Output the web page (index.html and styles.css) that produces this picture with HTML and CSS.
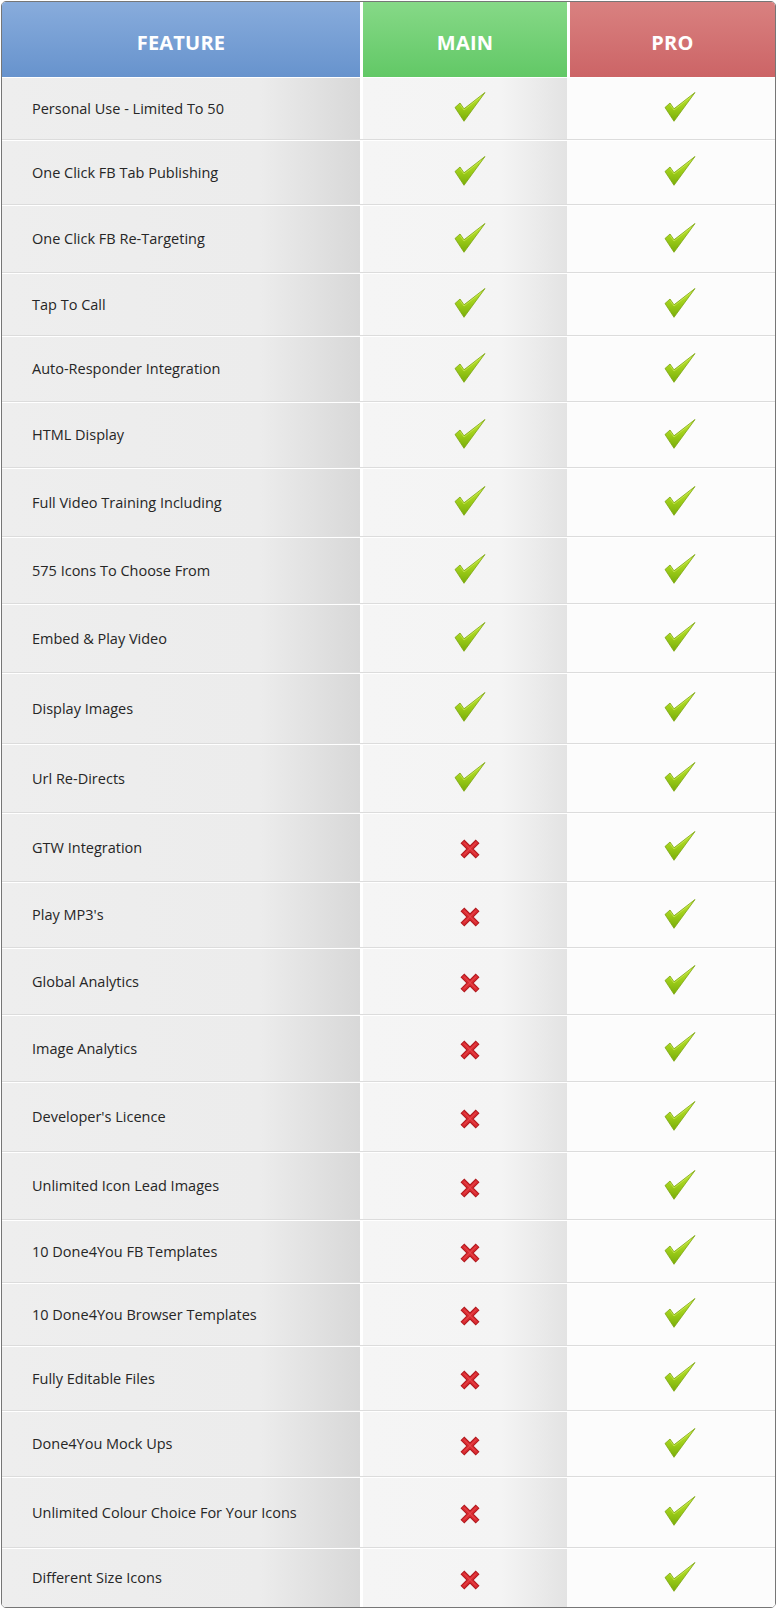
FILE: index.html
```html
<!DOCTYPE html>
<html lang="en">
<head>
<meta charset="utf-8">
<title>Feature Comparison</title>
<link rel="stylesheet" href="styles.css">
</head>
<body>
<svg class="defs" width="0" height="0" aria-hidden="true">
  <defs>
    <linearGradient id="gCheck" x1="0" y1="0" x2="0" y2="1">
      <stop offset="0" stop-color="#c4e83a"/>
      <stop offset="0.55" stop-color="#9ccc18"/>
      <stop offset="1" stop-color="#78ad0a"/>
    </linearGradient>
    <symbol id="check" viewBox="0 0 32 30">
      <path d="M1 15.5 L6 11 L10 16.8 L31 0.5 L10 29.3 Z" fill="url(#gCheck)" stroke="#7ba50f" stroke-width="0.8" stroke-linejoin="round"/>
      <path d="M6 12.5 L10 18 L27 4.5" fill="none" stroke="#d8f36a" stroke-width="0.8" opacity="0.7"/>
    </symbol>
    <symbol id="cross" viewBox="0 0 20 20">
      <path d="M2.4 2.4 L17.6 17.6 M17.6 2.4 L2.4 17.6" stroke="#ac171c" stroke-width="5.4" fill="none"/>
      <path d="M2.9 2.9 L17.1 17.1 M17.1 2.9 L2.9 17.1" stroke="#d92a30" stroke-width="3.6" fill="none"/>
      <path d="M4 3.6 L16 15.6 M16 3.6 L4 15.6" stroke="#ef5a5e" stroke-width="1" fill="none" opacity="0.75"/>
    </symbol>
  </defs>
</svg>

<div class="table">
  <div class="row head">
    <div class="hcell feature-h">FEATURE</div>
    <div class="hcell main-h">MAIN</div>
    <div class="hcell pro-h">PRO</div>
  </div>

  <div class="row"><div class="cell feat">Personal Use - Limited To 50</div><div class="cell main"><svg class="ic-check"><use href="#check"/></svg></div><div class="cell pro"><svg class="ic-check"><use href="#check"/></svg></div></div>
  <div class="row"><div class="cell feat">One Click FB Tab Publishing</div><div class="cell main"><svg class="ic-check"><use href="#check"/></svg></div><div class="cell pro"><svg class="ic-check"><use href="#check"/></svg></div></div>
  <div class="row"><div class="cell feat">One Click FB Re-Targeting</div><div class="cell main"><svg class="ic-check"><use href="#check"/></svg></div><div class="cell pro"><svg class="ic-check"><use href="#check"/></svg></div></div>
  <div class="row"><div class="cell feat">Tap To Call</div><div class="cell main"><svg class="ic-check"><use href="#check"/></svg></div><div class="cell pro"><svg class="ic-check"><use href="#check"/></svg></div></div>
  <div class="row"><div class="cell feat">Auto-Responder Integration</div><div class="cell main"><svg class="ic-check"><use href="#check"/></svg></div><div class="cell pro"><svg class="ic-check"><use href="#check"/></svg></div></div>
  <div class="row"><div class="cell feat">HTML Display</div><div class="cell main"><svg class="ic-check"><use href="#check"/></svg></div><div class="cell pro"><svg class="ic-check"><use href="#check"/></svg></div></div>
  <div class="row"><div class="cell feat">Full Video Training Including</div><div class="cell main"><svg class="ic-check"><use href="#check"/></svg></div><div class="cell pro"><svg class="ic-check"><use href="#check"/></svg></div></div>
  <div class="row"><div class="cell feat">575 Icons To Choose From</div><div class="cell main"><svg class="ic-check"><use href="#check"/></svg></div><div class="cell pro"><svg class="ic-check"><use href="#check"/></svg></div></div>
  <div class="row"><div class="cell feat">Embed &amp; Play Video</div><div class="cell main"><svg class="ic-check"><use href="#check"/></svg></div><div class="cell pro"><svg class="ic-check"><use href="#check"/></svg></div></div>
  <div class="row"><div class="cell feat">Display Images</div><div class="cell main"><svg class="ic-check"><use href="#check"/></svg></div><div class="cell pro"><svg class="ic-check"><use href="#check"/></svg></div></div>
  <div class="row"><div class="cell feat">Url Re-Directs</div><div class="cell main"><svg class="ic-check"><use href="#check"/></svg></div><div class="cell pro"><svg class="ic-check"><use href="#check"/></svg></div></div>
  <div class="row"><div class="cell feat">GTW Integration</div><div class="cell main"><svg class="ic-cross"><use href="#cross"/></svg></div><div class="cell pro"><svg class="ic-check"><use href="#check"/></svg></div></div>
  <div class="row"><div class="cell feat">Play MP3's</div><div class="cell main"><svg class="ic-cross"><use href="#cross"/></svg></div><div class="cell pro"><svg class="ic-check"><use href="#check"/></svg></div></div>
  <div class="row"><div class="cell feat">Global Analytics</div><div class="cell main"><svg class="ic-cross"><use href="#cross"/></svg></div><div class="cell pro"><svg class="ic-check"><use href="#check"/></svg></div></div>
  <div class="row"><div class="cell feat">Image Analytics</div><div class="cell main"><svg class="ic-cross"><use href="#cross"/></svg></div><div class="cell pro"><svg class="ic-check"><use href="#check"/></svg></div></div>
  <div class="row"><div class="cell feat">Developer's Licence</div><div class="cell main"><svg class="ic-cross"><use href="#cross"/></svg></div><div class="cell pro"><svg class="ic-check"><use href="#check"/></svg></div></div>
  <div class="row"><div class="cell feat">Unlimited Icon Lead Images</div><div class="cell main"><svg class="ic-cross"><use href="#cross"/></svg></div><div class="cell pro"><svg class="ic-check"><use href="#check"/></svg></div></div>
  <div class="row"><div class="cell feat">10 Done4You FB Templates</div><div class="cell main"><svg class="ic-cross"><use href="#cross"/></svg></div><div class="cell pro"><svg class="ic-check"><use href="#check"/></svg></div></div>
  <div class="row"><div class="cell feat">10 Done4You Browser Templates</div><div class="cell main"><svg class="ic-cross"><use href="#cross"/></svg></div><div class="cell pro"><svg class="ic-check"><use href="#check"/></svg></div></div>
  <div class="row"><div class="cell feat">Fully Editable Files</div><div class="cell main"><svg class="ic-cross"><use href="#cross"/></svg></div><div class="cell pro"><svg class="ic-check"><use href="#check"/></svg></div></div>
  <div class="row"><div class="cell feat">Done4You Mock Ups</div><div class="cell main"><svg class="ic-cross"><use href="#cross"/></svg></div><div class="cell pro"><svg class="ic-check"><use href="#check"/></svg></div></div>
  <div class="row"><div class="cell feat">Unlimited Colour Choice For Your Icons</div><div class="cell main"><svg class="ic-cross"><use href="#cross"/></svg></div><div class="cell pro"><svg class="ic-check"><use href="#check"/></svg></div></div>
  <div class="row"><div class="cell feat">Different Size Icons</div><div class="cell main"><svg class="ic-cross"><use href="#cross"/></svg></div><div class="cell pro"><svg class="ic-check"><use href="#check"/></svg></div></div>
</div>
</body>
</html>
```

FILE: styles.css
```css
* { box-sizing: border-box; }

html, body {
  margin: 0;
  padding: 0;
  background: #ffffff;
}

body {
  padding: 1px 0 0 1px;
  font-family: "Open Sans", "Noto Sans", "DejaVu Sans", sans-serif;
}

.defs {
  position: absolute;
  width: 0;
  height: 0;
  overflow: hidden;
}

.table {
  width: 775px;
  border: 1px solid #767676;
  border-radius: 5px;
  overflow: hidden;
  background: #ffffff;
  display: grid;
  grid-template-rows:
    75px 63px 65px 68px 63px 66px 66px 69px 67px 69px 71px 69px
    69px 66px 67px 67px 70px 68px 63px 63px 65px 66px 71px 59px;
}

.row {
  display: grid;
  grid-template-columns: 358px 204px 205px;
  column-gap: 3px;
  background: #ffffff;
}

.row + .row {
  border-top: 1px solid #ffffff;
}

.row:not(.head):not(:last-child) {
  border-bottom: 1px solid #dcdcdc;
}

/* header */
.hcell {
  display: flex;
  align-items: center;
  justify-content: center;
  padding-top: 5px;
  color: #ffffff;
  font-size: 20px;
  font-weight: 700;
  letter-spacing: 0.2px;
}

.feature-h { background: linear-gradient(to bottom, #88acdc, #6793cd); }
.main-h    { background: linear-gradient(to bottom, #86d987, #62c866); }
.pro-h     { background: linear-gradient(to bottom, #d98180, #cc6466); }

/* body cells */
.cell {
  display: flex;
  align-items: center;
}

.feat {
  padding-left: 30px;
  padding-bottom: 1px;
  font-size: 14.5px;
  color: #262626;
  background: linear-gradient(to right, #eeeeee 0%, #ececec 72%, #d8d8d8 100%);
}

.main {
  justify-content: center;
  padding-left: 10px;
  background: linear-gradient(to right, #f5f5f5 0%, #f4f4f4 68%, #e3e3e3 100%);
}

.pro {
  justify-content: center;
  padding-left: 17px;
  background: #fcfcfc;
  margin-left: -3px;
}

.ic-check {
  width: 32px;
  height: 30px;
  margin-top: -3px;
}

.ic-cross {
  width: 20px;
  height: 20px;
  margin-top: 3px;
}
```
